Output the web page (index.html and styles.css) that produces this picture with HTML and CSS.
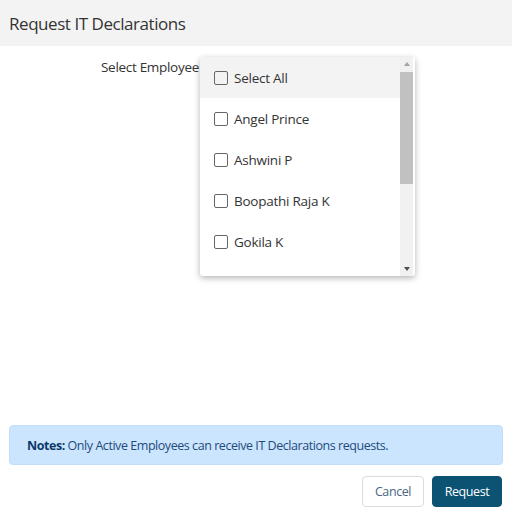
FILE: index.html
```html
<!DOCTYPE html>
<html>
<head>
<meta charset="utf-8">
<link rel="stylesheet" href="styles.css">
</head>
<body>
<div class="modal">
  <div class="modal-header">Request IT Declarations</div>
  <div class="modal-body">
    <div class="form-row">
      <label class="form-label">Select Employee</label>
      <div class="select-wrap">
        <div class="dropdown">
          <ul class="options">
            <li class="option active"><span class="check"></span>Select All</li>
            <li class="option"><span class="check"></span>Angel Prince</li>
            <li class="option"><span class="check"></span>Ashwini P</li>
            <li class="option"><span class="check"></span>Boopathi Raja K</li>
            <li class="option"><span class="check"></span>Gokila K</li>
          </ul>
          <div class="scrollbar">
            <span class="arrow up"></span>
            <div class="track"><div class="thumb"></div></div>
            <span class="arrow down"></span>
          </div>
        </div>
      </div>
    </div>
  </div>
  <div class="notes"><b>Notes:</b> Only Active Employees can receive IT Declarations requests.</div>
  <div class="modal-footer">
    <button class="btn btn-cancel">Cancel</button>
    <button class="btn btn-primary">Request</button>
  </div>
</div>
</body>
</html>
```

FILE: styles.css
```css
* { box-sizing: border-box; }
html, body { margin: 0; padding: 0; background: #fff; }
body { font-family: "Open Sans", "Noto Sans", sans-serif; color: #333; }

.modal {
  width: 512px;
  height: 521px;
  display: flex;
  flex-direction: column;
}

.modal-header {
  height: 46px;
  background: #f3f3f3;
  padding: 0 9px;
  display: flex;
  align-items: center;
  font-size: 17px;
  color: #333;
  letter-spacing: -0.45px;
}

.modal-body { flex: 1; }

.form-row {
  display: flex;
  padding-top: 11px;
}

.form-label {
  width: 200px;
  padding-left: 101px;
  font-size: 13.5px;
  line-height: 20px;
  white-space: nowrap;
  letter-spacing: -0.3px;
}

.select-wrap { position: relative; flex: 1; }

.dropdown {
  position: absolute;
  left: 0;
  top: 0;
  z-index: 2;
  width: 215px;
  height: 219px;
  background: #fff;
  border-radius: 3px;
  box-shadow: 0 2px 6px rgba(0,0,0,0.3);
  display: flex;
  overflow: hidden;
}

.options {
  list-style: none;
  margin: 0;
  padding: 0;
  flex: 1;
}

.option {
  height: 41px;
  display: flex;
  align-items: center;
  padding-left: 14px;
  font-size: 13.5px;
  letter-spacing: -0.25px;
  color: #333;
}
.option.active { background: #f3f3f3; }

.check {
  width: 14px;
  height: 14px;
  border: 1.5px solid #666;
  border-radius: 2px;
  margin-right: 6px;
  flex: none;
}

.scrollbar {
  width: 13px;
  margin-right: 2px;
  background: #f1f1f1;
  display: flex;
  flex-direction: column;
  align-items: center;
}
.arrow { width: 0; height: 0; border-left: 3.5px solid transparent; border-right: 3.5px solid transparent; }
.arrow.up { border-bottom: 4px solid #a3a3a3; margin: 5px 0 6px; }
.arrow.down { border-top: 4px solid #505050; margin: 6px 0 5px; }
.track { flex: 1; width: 100%; }
.thumb { width: 13px; height: 112px; background: #c1c1c1; }

.notes {
  margin: 0 9px;
  height: 40px;
  background: #cce5ff;
  border: 1px solid #c1ddf8;
  border-radius: 4px;
  color: #1f4b7a;
  font-size: 12.5px;
  display: flex;
  align-items: center;
  padding-left: 17px;
  letter-spacing: -0.45px;
  white-space: pre;
}
.notes b { color: #0d3a6b; font-weight: 700; }

.modal-footer {
  display: flex;
  justify-content: flex-end;
  gap: 8px;
  padding: 11px 10px 14px;
}

.btn {
  height: 31px;
  font-family: "Open Sans", "Noto Sans", sans-serif;
  font-size: 12.5px;
  border-radius: 4px;
  padding: 0;
  letter-spacing: -0.4px;
}
.btn-cancel {
  width: 62px;
  background: #fff;
  border: 1px solid #dcdcdc;
  color: #4a6684;
}
.btn-primary {
  width: 70px;
  background: #0b5273;
  border: 1px solid #0b5273;
  color: #fff;
}
```
